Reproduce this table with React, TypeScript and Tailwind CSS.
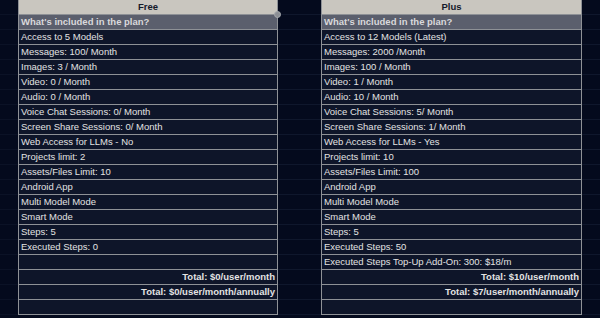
import React from "react";

type Kind = "head" | "sub" | "item" | "total";
const rows: [string, string, Kind][] = [
  ["Free", "Plus", "head"],
  ["What's included in the plan?", "What's included in the plan?", "sub"],
  ["Access to 5 Models", "Access to 12 Models (Latest)", "item"],
  ["Messages: 100/ Month", "Messages: 2000 /Month", "item"],
  ["Images: 3 / Month", "Images: 100 / Month", "item"],
  ["Video: 0 / Month", "Video: 1 / Month", "item"],
  ["Audio: 0 / Month", "Audio: 10 / Month", "item"],
  ["Voice Chat Sessions: 0/ Month", "Voice Chat Sessions: 5/ Month", "item"],
  ["Screen Share Sessions: 0/ Month", "Screen Share Sessions: 1/ Month", "item"],
  ["Web Access for LLMs - No", "Web Access for LLMs - Yes", "item"],
  ["Projects limit: 2", "Projects limit: 10", "item"],
  ["Assets/Files Limit: 10", "Assets/Files Limit: 100", "item"],
  ["Android App", "Android App", "item"],
  ["Multi Model Mode", "Multi Model Mode", "item"],
  ["Smart Mode", "Smart Mode", "item"],
  ["Steps: 5", "Steps: 5", "item"],
  ["Executed Steps: 0", "Executed Steps: 50", "item"],
  ["", "Executed Steps Top-Up Add-On: 300: $18/m", "item"],
  ["Total: $0/user/month", "Total: $10/user/month", "total"],
  ["Total: $0/user/month/annually", "Total: $7/user/month/annually", "total"],
  ["", "", "item"],
];

function Cell({ text, kind, width }: { text: string; kind: Kind; width: string }) {
  const base = `${width} shrink-0 border-x border-b border-[#8e9196] flex items-center overflow-hidden whitespace-nowrap leading-none`;
  if (kind === "head")
    return (
      <div className={`${base} bg-[#c9c6bf] justify-center font-bold text-[#151a2a]`}>{text}</div>
    );
  if (kind === "sub")
    return (
      <div className={`${base} bg-[#5b5f6d] pl-[2px] font-bold text-[#d9d9db]`}>{text}</div>
    );
  if (kind === "total")
    return (
      <div className={`${base} bg-[#0e1529] justify-end pr-[2px] font-bold text-[#e3e3e3]`}>{text}</div>
    );
  return <div className={`${base} bg-[#0e1529] pl-[2px] text-[#e3e3e3]`}>{text}</div>;
}

export default function App() {
  return (
    <div
      className="relative w-[600px] h-[318px] overflow-hidden bg-[#040a1d] text-[9.5px]"
      style={{ fontFamily: '"Liberation Sans", Arial, sans-serif' }}
    >
      {rows.map(([f, p, k], i) => (
        <div key={i} className={`flex ${k === "head" ? "h-[15px]" : "h-[15px]"}`}>
          <div className="w-[18px] shrink-0 border-b border-[#0b1226]" />
          <Cell text={f} kind={k} width="w-[260px]" />
          <div className="w-[43px] shrink-0 border-b border-[#0f172c]" />
          <Cell text={p} kind={k} width="w-[261px]" />
          <div className="flex-1 border-b border-[#0f172c]" />
        </div>
      ))}
      <div className="absolute left-[274px] top-[11px] w-[7px] h-[7px] rounded-full bg-[#8c8f95] border border-[#a5a8ad]" />
    </div>
  );
}
